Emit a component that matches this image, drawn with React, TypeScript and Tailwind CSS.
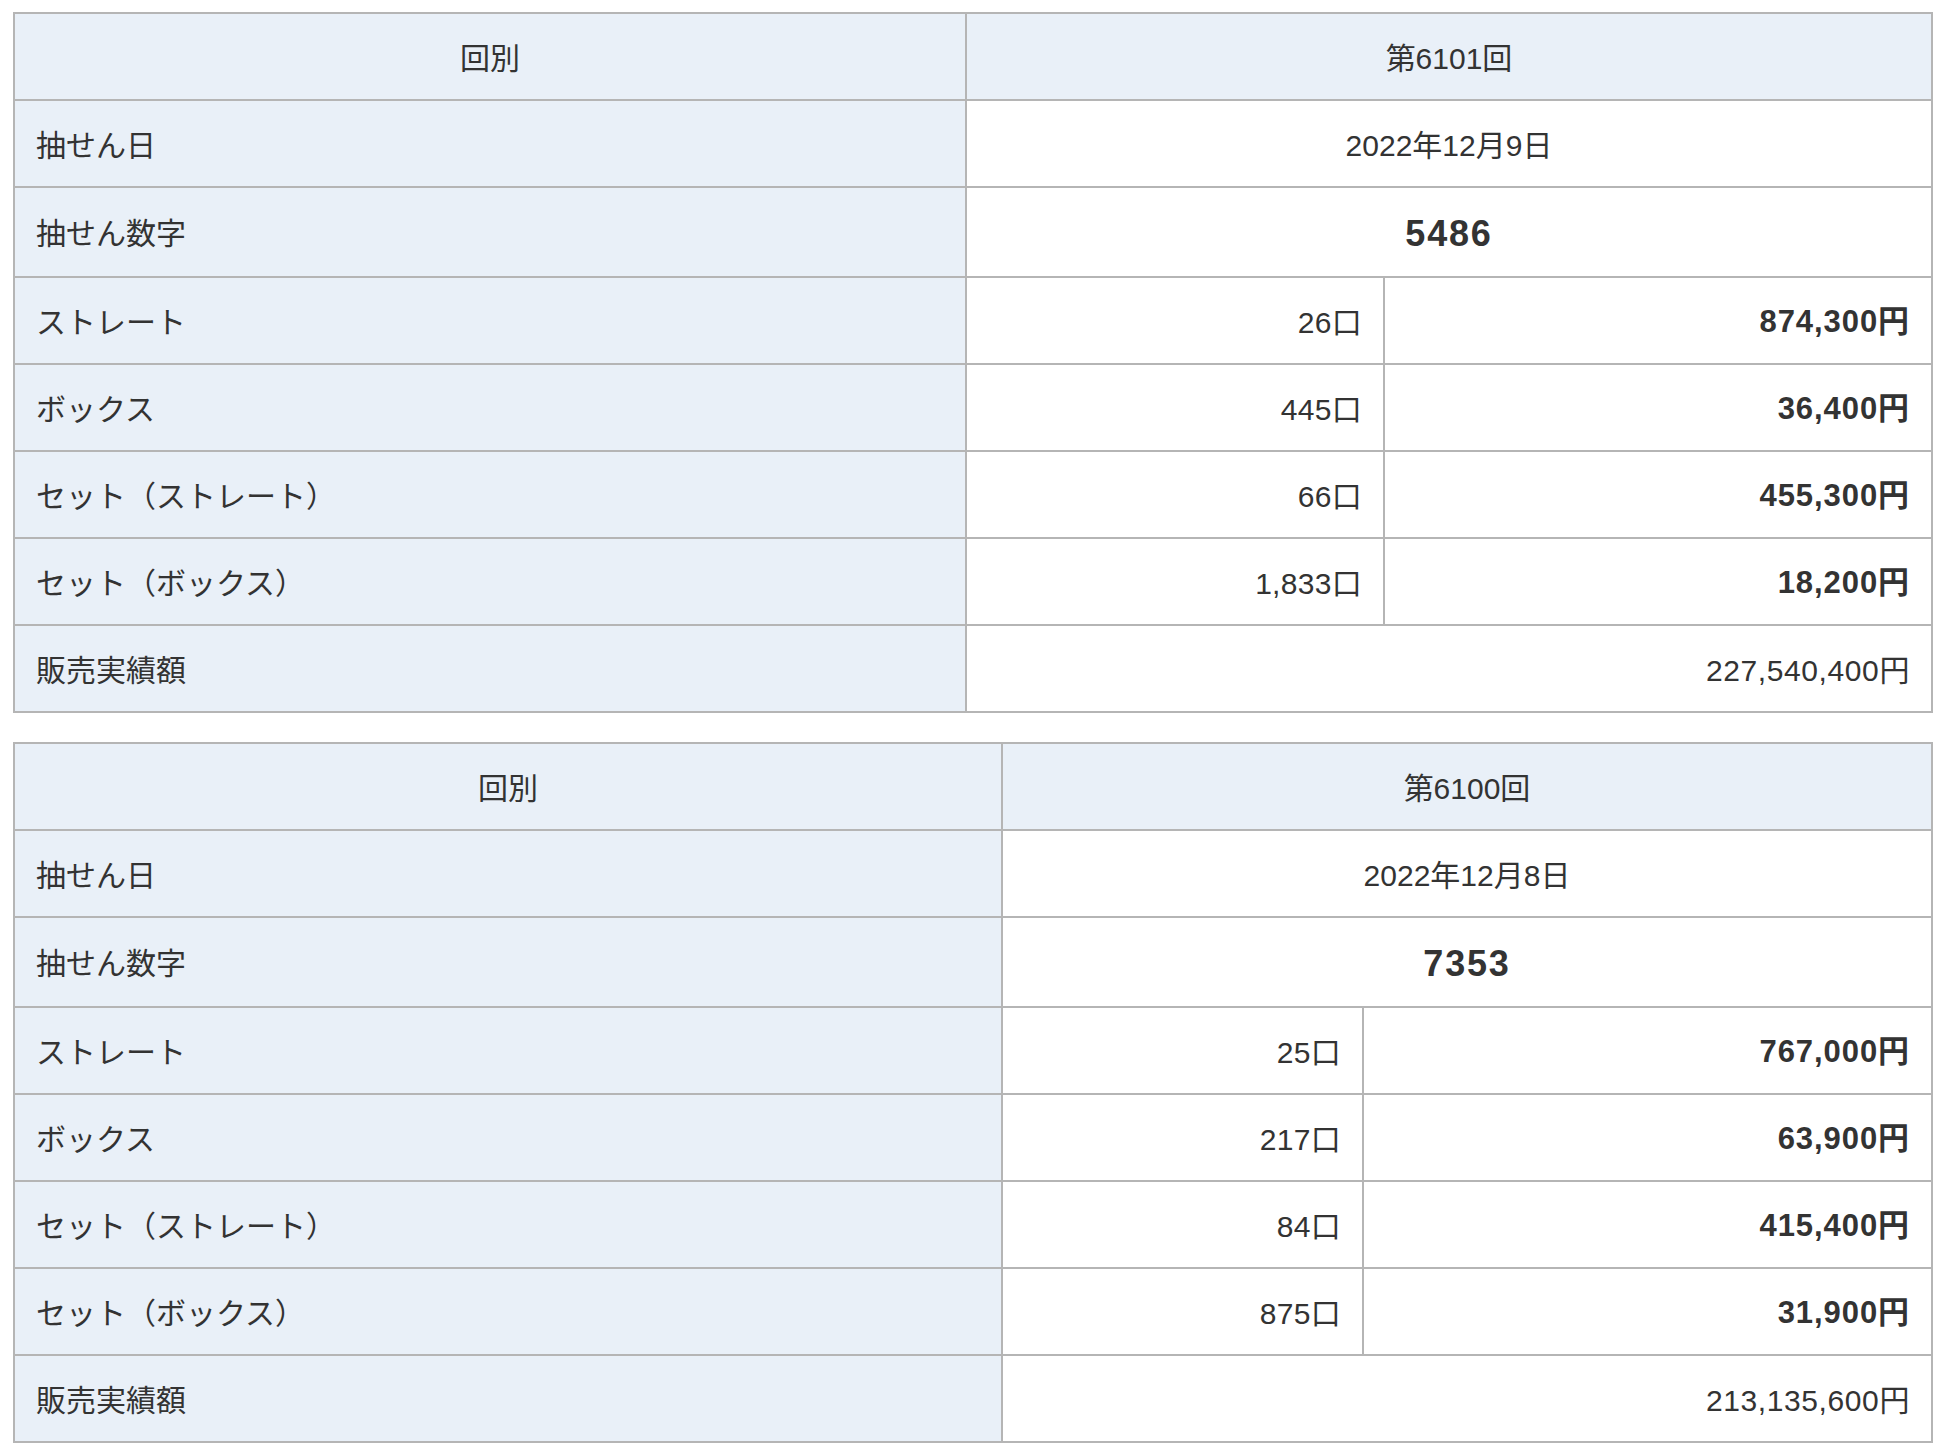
import React from 'react';

type Prize = { label: string; count: string; amount: string };

type Draw = {
  no: string;
  date: string;
  number: string;
  prizes: Prize[];
  sales: string;
  labelW: string;
  countW: string;
};

const draws: Draw[] = [
  {
    no: '第6101回',
    date: '2022年12月9日',
    number: '5486',
    prizes: [
      { label: 'ストレート', count: '26口', amount: '874,300円' },
      { label: 'ボックス', count: '445口', amount: '36,400円' },
      { label: 'セット（ストレート）', count: '66口', amount: '455,300円' },
      { label: 'セット（ボックス）', count: '1,833口', amount: '18,200円' },
    ],
    sales: '227,540,400円',
    labelW: 'w-[952px]',
    countW: 'w-[418px]',
  },
  {
    no: '第6100回',
    date: '2022年12月8日',
    number: '7353',
    prizes: [
      { label: 'ストレート', count: '25口', amount: '767,000円' },
      { label: 'ボックス', count: '217口', amount: '63,900円' },
      { label: 'セット（ストレート）', count: '84口', amount: '415,400円' },
      { label: 'セット（ボックス）', count: '875口', amount: '31,900円' },
    ],
    sales: '213,135,600円',
    labelW: 'w-[988px]',
    countW: 'w-[361px]',
  },
];

const cell = 'border-2 border-[#b5b5b5] px-[21px] pt-[3px] pb-0';
const head = `${cell} bg-[#e9f0f8] text-left font-normal`;

const DrawTable: React.FC<{ d: Draw }> = ({ d }) => (
  <table className="w-[1920px] table-fixed border-collapse text-[30px] text-[#333]">
    <colgroup>
      <col className={d.labelW} />
      <col className={d.countW} />
      <col />
    </colgroup>
    <tbody>
      <tr className="h-[87px]">
        <th className={`${cell} bg-[#e9f0f8] text-center font-normal`}>回別</th>
        <th colSpan={2} className={`${cell} bg-[#e9f0f8] text-center font-normal`}>
          {d.no}
        </th>
      </tr>
      <tr className="h-[87px]">
        <th className={head}>抽せん日</th>
        <td colSpan={2} className={`${cell} bg-white text-center`}>
          {d.date}
        </td>
      </tr>
      <tr className="h-[90px]">
        <th className={head}>抽せん数字</th>
        <td
          colSpan={2}
          className={`${cell} bg-white text-center text-[36px] font-bold tracking-[0.05em]`}
        >
          {d.number}
        </td>
      </tr>
      {d.prizes.map((p) => (
        <tr key={p.label} className="h-[87px]">
          <th className={head}>{p.label}</th>
          <td className={`${cell} bg-white text-right tracking-[0.01em]`}>{p.count}</td>
          <td className={`${cell} bg-white text-right text-[31px] font-bold tracking-[0.03em]`}>
            {p.amount}
          </td>
        </tr>
      ))}
      <tr className="h-[87px]">
        <th className={head}>販売実績額</th>
        <td colSpan={2} className={`${cell} bg-white text-right tracking-[0.02em]`}>
          {d.sales}
        </td>
      </tr>
    </tbody>
  </table>
);

export default function App() {
  return (
    <div
      className="min-h-screen bg-white px-[13px] pt-[12px] leading-normal"
      style={{ fontFamily: '"Liberation Sans", "Noto Sans CJK JP", sans-serif' }}
    >
      <div className="flex flex-col gap-[29px]">
        {draws.map((d) => (
          <DrawTable key={d.no} d={d} />
        ))}
      </div>
    </div>
  );
}
